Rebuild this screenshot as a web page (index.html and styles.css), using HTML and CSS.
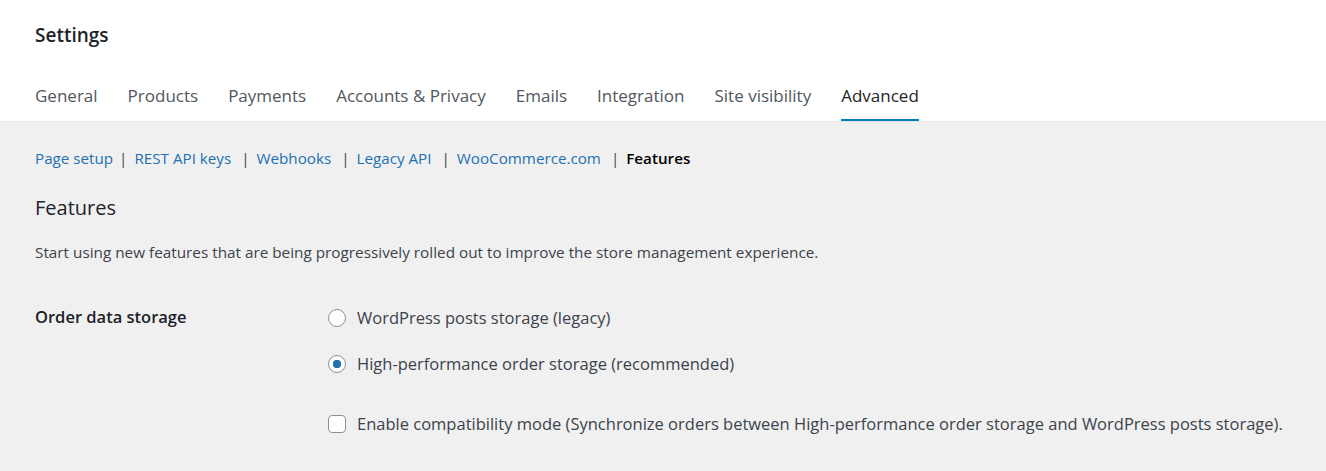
FILE: index.html
```html
<!DOCTYPE html>
<html lang="en">
<head>
  <meta charset="UTF-8">
  <meta name="viewport" content="width=device-width, initial-scale=1.0">
  <title>Settings - Advanced - Features</title>
  <link rel="stylesheet" href="styles.css">
</head>
<body>
  <div class="header">
    <h1 class="page-title">Settings</h1>
    <nav class="tabs">
      <a class="tab" href="#">General</a>
      <a class="tab" href="#">Products</a>
      <a class="tab" href="#">Payments</a>
      <a class="tab" href="#">Accounts &amp; Privacy</a>
      <a class="tab" href="#">Emails</a>
      <a class="tab" href="#">Integration</a>
      <a class="tab" href="#">Site visibility</a>
      <a class="tab active" href="#">Advanced</a>
    </nav>
  </div>

  <div class="content">
    <ul class="subsubsub">
      <li><a href="#">Page setup</a><span class="sep">|</span></li>
      <li><a href="#">REST API keys</a><span class="sep">|</span></li>
      <li><a href="#">Webhooks</a><span class="sep">|</span></li>
      <li><a href="#">Legacy API</a><span class="sep">|</span></li>
      <li><a href="#">WooCommerce.com</a><span class="sep">|</span></li>
      <li><span class="current">Features</span></li>
    </ul>

    <h2 class="section-title">Features</h2>
    <p class="description">Start using new features that are being progressively rolled out to improve the store management experience.</p>

    <div class="form-row">
      <div class="form-label">Order data storage</div>
      <div class="form-field">
        <label class="choice">
          <input type="radio" name="storage">
          <span>WordPress posts storage (legacy)</span>
        </label>
        <label class="choice">
          <input type="radio" name="storage" checked>
          <span>High-performance order storage (recommended)</span>
        </label>
        <label class="choice compat">
          <input type="checkbox">
          <span>Enable compatibility mode (Synchronize orders between High-performance order storage and WordPress posts storage).</span>
        </label>
      </div>
    </div>
  </div>
</body>
</html>
```

FILE: styles.css
```css
/* Reset */
body, h1, h2, p, ul {
  margin: 0;
  padding: 0;
}

body {
  font-family: 'Open Sans', 'Noto Sans', sans-serif;
  background-color: #f0f0f1;
  color: #3c434a;
  height: 100vh;
  overflow: hidden;
}

a {
  text-decoration: none;
}

/* Header with tabs */
.header {
  background-color: #fff;
  border-bottom: 1px solid #e4e4e6;
  padding: 0 35px;
}

.page-title {
  font-size: 19px;
  font-weight: 600;
  color: #1d2327;
  padding-top: 22px;
  line-height: 26px;
}

.tabs {
  display: flex;
  gap: 30px;
  margin-top: 36px;
}

.tab {
  font-size: 17px;
  color: #50575e;
  line-height: 24px;
  padding-bottom: 11px;
  border-bottom: 2px solid transparent;
  font-weight: 500;
}

.tab.active {
  color: #1d2327;
  border-bottom-color: #007cba;
}

/* Content area */
.content {
  padding: 0 35px;
}

.subsubsub {
  list-style: none;
  display: flex;
  margin-top: 25px;
  font-size: 15.2px;
  line-height: 22px;
}

.subsubsub li {
  margin-right: 7px;
}

.subsubsub a {
  color: #2271b1;
}

.subsubsub .sep {
  color: #3c434a;
  margin-left: 10px;
}

.subsubsub li:first-child .sep {
  margin-left: 6px;
}

.subsubsub .current {
  color: #000;
  font-weight: 600;
}

.section-title {
  font-size: 20px;
  font-weight: 500;
  color: #1d2327;
  margin-top: 25px;
  line-height: 28px;
}

.description {
  font-size: 15.3px;
  margin-top: 19px;
  line-height: 22px;
}

/* Form */
.form-row {
  display: flex;
  margin-top: 42px;
}

.form-label {
  width: 293px;
  font-size: 16.5px;
  font-weight: 600;
  color: #1d2327;
  line-height: 24px;
}

.form-field {
  display: flex;
  flex-direction: column;
  padding-top: 1px;
}

.choice {
  display: flex;
  align-items: center;
  gap: 11px;
  font-size: 16.5px;
  line-height: 24px;
  margin-bottom: 22px;
}

.choice.compat {
  margin-top: 14px;
}

.choice input {
  margin: 0;
  width: 18px;
  height: 18px;
  appearance: none;
  border: 1px solid #8c8f94;
  background-color: #fff;
  flex-shrink: 0;
}

.choice input[type="radio"] {
  border-radius: 50%;
}

.choice input[type="radio"]:checked {
  background: radial-gradient(circle, #2271b1 0 4px, #fff 4.5px);
}

.choice input[type="checkbox"] {
  border-radius: 4px;
}
```
